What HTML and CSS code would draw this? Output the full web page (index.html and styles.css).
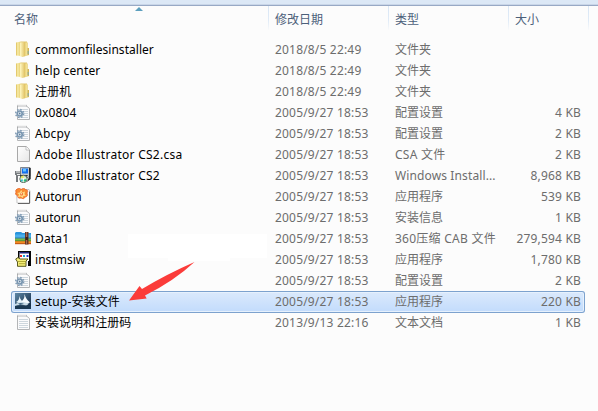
FILE: index.html
```html
<!DOCTYPE html>
<html lang="zh-CN">
<head>
<meta charset="utf-8">
<title>文件列表</title>
<link rel="stylesheet" href="styles.css">
</head>
<body>
<svg class="defs" width="0" height="0">
  <defs>
    <linearGradient id="gold" x1="0" x2="1"><stop offset="0" stop-color="#dcbc58"/><stop offset=".35" stop-color="#f8eca6"/><stop offset="1" stop-color="#e3c868"/></linearGradient>
    <linearGradient id="gold2" x1="0" x2="1"><stop offset="0" stop-color="#fff8c4"/><stop offset="1" stop-color="#e0c161"/></linearGradient>
    <linearGradient id="paper" x1="0" y1="0" x2="1" y2="1"><stop offset="0" stop-color="#fff"/><stop offset="1" stop-color="#e6e6e6"/></linearGradient>
    <linearGradient id="navy" x1="0" y1="0" x2="1" y2="1"><stop offset="0" stop-color="#5d87a6"/><stop offset="1" stop-color="#0c223c"/></linearGradient>
  </defs>
  <symbol id="folder" viewBox="0 0 16 16">
    <path d="M1 1.500 6 .5V15L1 14.400z" fill="url(#gold)"/>
    <path d="M6 .5h6v14L7 15.800z" fill="#e0c56c"/>
    <path d="M5 1.500 10 1v14.300L6 15.800 5 15z" fill="url(#gold2)"/>
    <path d="M10 1.500h2.700v12.800L10 15.300z" fill="url(#gold)"/>
    <path d="M12.500 7H14v7l-1.500.5z" fill="#d2b655"/>
    <path d="M12.700 10h.9v3h-.9z" fill="#7aa9a9"/>
  </symbol>
  <symbol id="note" viewBox="0 0 16 16">
    <path d="M2.500 2h9l3 2.500v11h-12z" fill="#fbfbfc" stroke="#b3b5b7"/>
    <path d="M3 .8v2M5 .8v2M7 .8v2M9 .8v2M11 .8v2" stroke="#939597" stroke-width=".8"/>
    <path d="M4 .8v2M6 .8v2M8 .8v2M10 .8v2" stroke="#fff" stroke-width="1"/>
    <path d="M4 5.500h9M4 7.500h9M4 9.500h9M4 11.500h9M4 13.500h9" stroke="#cdd6dd"/>
  </symbol>
  <symbol id="config" viewBox="0 0 16 16">
    <use href="#note"/>
    <circle cx="4.700" cy="9.500" r="4" fill="none" stroke="#7f9ab4" stroke-width="1.400" stroke-dasharray="1.570 1.570"/>
    <circle cx="4.700" cy="9.500" r="2.500" fill="#eaf2f8" stroke="#7895b0" stroke-width="1.700"/>
    <circle cx="4.700" cy="9.500" r=".9" fill="#607e9b"/>
  </symbol>
  <symbol id="blank" viewBox="0 0 16 16">
    <path d="M2.500.5h8.700l3.300 3.300v11.700h-12z" fill="url(#paper)" stroke="#a8a8a8"/>
    <path d="M11 .8V4h3.300" fill="#fff" stroke="#b5b5b5" stroke-width=".8"/>
  </symbol>
  <symbol id="msi" viewBox="0 0 16 16">
    <path d="M0 4h6v11H5V9H3v6H1V8H0z" fill="#777b7e"/>
    <path d="M1 4.500h4v1H1zM2 7h3v1H2z" fill="#e9ecec"/>
    <path d="M5.500.5H15v8l-2 2H5.500z" fill="#c4c9ce" stroke="#68717a" stroke-width=".8"/>
    <path d="M7 1.500h6v5H7z" fill="#1470ee"/><path d="M8 2h3v2.500H8z" fill="#64c5ff"/>
    <path d="M14 1h1.700v11L12 15l2-5z" fill="#25282b"/>
    <path d="M5 8h8l-1 1.500H5z" fill="#30373b"/>
    <circle cx="8.500" cy="12" r="3.700" fill="#d5eddb" stroke="#26352c" stroke-width=".7"/>
    <path d="M8.500 12 5.500 10l3-1.500z" fill="#f2e648"/><path d="m8.500 12 3.300.5-2 2.700z" fill="#13b766"/><path d="m8.500 12-3.200 1L7 15z" fill="#30bdd0"/>
    <circle cx="8.500" cy="12" r="1" fill="#fff"/>
  </symbol>
  <symbol id="flower" viewBox="0 0 16 16">
    <path d="M1.500 1.500H14L15 3v12H2z" fill="#fff" stroke="#c8c8c8"/>
    <path d="M14.500 3.500v12H3" fill="none" stroke="#666"/>
    <path d="M2 1q3-1.500 4 .5 3-2.500 4.500 0 3.500.5 1.500 3.500 1.500 3.500-1.700 4-1.300 3-4.300 1-3.500 1-3.300-2.300Q-.8 6.500 1 4.300 0 2 2 1z" fill="#f98c32" stroke="#e65d25" stroke-width=".7"/>
    <path d="m6.300 2 1 2.500 2.700-1-.5 2.700 1.500 1.500-2.700.3-.5 2-2-1.500L3 9l1-2.500L2.200 5l2.500-.5z" fill="#ffda86"/>
    <circle cx="6.500" cy="6" r="1.500" fill="#f06433"/><circle cx="6.300" cy="5.700" r=".8" fill="#fff3a6"/>
  </symbol>
  <symbol id="archive" viewBox="0 0 16 16">
    <path d="M0 3 1 2h5l1.500 1H16v4H0z" fill="#2a94dc"/><path d="M0 4.500h16V8H0z" fill="#4cb0ec"/>
    <path d="M0 8h16v3H0z" fill="#79b94a"/><path d="M0 7.500h16v1H0z" fill="#2d7daf"/>
    <path d="M0 11h16v3H0z" fill="#f58b22"/><path d="M0 10.500h16v.7H0z" fill="#477d2c"/><path d="M0 13h16v1.200H0z" fill="#c75d18"/>
    <path d="M10 2h3.500v12.500H10z" fill="#6a3826"/><path d="M11 2h1v12h-1z" fill="#a06a54"/><path d="M10.500 7H13v3h-2.500z" fill="#3b241b"/>
  </symbol>
  <symbol id="box" viewBox="0 0 16 16">
    <path d="M3 0h13v15h-3V9H3z" fill="#050505"/>
    <path d="M4.500 1H14v9H4.500z" fill="#fff"/><path d="M4.500 1H14v1.500H4.500z" fill="#22267a"/>
    <path d="M5 4h2v2H5z" fill="#e12d29"/><path d="M8 4h2v2H8z" fill="#159dd1"/><path d="M11.500 4h2v2h-2z" fill="#2432c7"/>
    <path d="m.7 8 2.300-1.500 2 1.500h8l-2 2v5.300H2.500V11z" fill="#f4ee78" stroke="#4a4810" stroke-width=".9"/>
    <path d="M3 10.500h8M4 12.700h6" stroke="#a39a26" stroke-width=".8"/>
  </symbol>
  <symbol id="shield" viewBox="0 0 16 16">
    <path d="M0 0h16v16H0z" fill="url(#navy)"/>
    <path d="M5 9Q10 7 9.500 1q1.500 5.500 5.500 8.500l-6 2z" fill="#f5fbff"/>
    <path d="M1 9q4-2 3-6 1.500 3.500 3 5l-1 3z" fill="#e8f4fa"/>
    <path d="M0 11q5-2.500 8-2l6 1.500-3 2.500q-6-2-11 0z" fill="#c9dce7"/>
    <path d="M3 10.500q3-1 6 .5l-4 1z" fill="#3f6480"/><path d="M0 13q8-1.500 16 0v3H0z" fill="#1c3953"/>
  </symbol>
</svg>

<div class="toolbar-edge"></div>
<main class="list">
  <header class="head">
    <div class="h name">名称<i class="sort"></i></div>
    <div class="h date">修改日期</div>
    <div class="h type">类型</div>
    <div class="h size">大小</div>
  </header>
  <div class="row"><svg class="icon"><use href="#folder"/></svg><span class="fname snug">commonfilesinstaller</span><span class="fdate">2018/8/5 22:49</span><span class="ftype">文件夹</span><span class="fsize"></span></div>
  <div class="row"><svg class="icon"><use href="#folder"/></svg><span class="fname">help center</span><span class="fdate">2018/8/5 22:49</span><span class="ftype">文件夹</span><span class="fsize"></span></div>
  <div class="row"><svg class="icon"><use href="#folder"/></svg><span class="fname">注册机</span><span class="fdate">2018/8/5 22:49</span><span class="ftype">文件夹</span><span class="fsize"></span></div>
  <div class="row"><svg class="icon"><use href="#config"/></svg><span class="fname">0x0804</span><span class="fdate">2005/9/27 18:53</span><span class="ftype">配置设置</span><span class="fsize">4 KB</span></div>
  <div class="row"><svg class="icon"><use href="#config"/></svg><span class="fname wide">Abcpy</span><span class="fdate">2005/9/27 18:53</span><span class="ftype">配置设置</span><span class="fsize">2 KB</span></div>
  <div class="row"><svg class="icon"><use href="#blank"/></svg><span class="fname wide">Adobe Illustrator CS2.csa</span><span class="fdate">2005/9/27 18:53</span><span class="ftype wide">CSA 文件</span><span class="fsize">2 KB</span></div>
  <div class="row"><svg class="icon"><use href="#msi"/></svg><span class="fname wide">Adobe Illustrator CS2</span><span class="fdate">2005/9/27 18:53</span><span class="ftype latin">Windows Install...</span><span class="fsize">8,968 KB</span></div>
  <div class="row"><svg class="icon"><use href="#flower"/></svg><span class="fname snug">Autorun</span><span class="fdate">2005/9/27 18:53</span><span class="ftype">应用程序</span><span class="fsize">539 KB</span></div>
  <div class="row"><svg class="icon"><use href="#config"/></svg><span class="fname snug">autorun</span><span class="fdate">2005/9/27 18:53</span><span class="ftype">安装信息</span><span class="fsize">1 KB</span></div>
  <div class="row"><svg class="icon"><use href="#archive"/></svg><span class="fname">Data1</span><span class="fdate">2005/9/27 18:53</span><span class="ftype wide">360压缩 CAB 文件</span><span class="fsize">279,594 KB</span></div>
  <div class="row"><svg class="icon"><use href="#box"/></svg><span class="fname snug">instmsiw</span><span class="fdate">2005/9/27 18:53</span><span class="ftype">应用程序</span><span class="fsize">1,780 KB</span></div>
  <div class="row"><svg class="icon"><use href="#config"/></svg><span class="fname snug">Setup</span><span class="fdate">2005/9/27 18:53</span><span class="ftype">配置设置</span><span class="fsize">2 KB</span></div>
  <div class="row selected"><svg class="icon"><use href="#shield"/></svg><span class="fname">setup-安装文件</span><span class="fdate">2005/9/27 18:53</span><span class="ftype">应用程序</span><span class="fsize">220 KB</span></div>
  <div class="row"><svg class="icon"><use href="#note"/></svg><span class="fname snug">安装说明和注册码</span><span class="fdate">2013/9/13 22:16</span><span class="ftype">文本文档</span><span class="fsize">1 KB</span></div>
</main>
<div class="patch"></div>
<div class="patch lower"></div>
<svg class="arrow" viewBox="0 0 67 40"><path d="M65.500 0Q45 19 16 33.500L17.700 36.500 0 38.500 10.500 24 13 27Q38 12 65.500 0z" fill="#fb3c3a"/></svg>
</body>
</html>
```
FILE: styles.css
```css
* { box-sizing: border-box; }
body {
  margin: 0;
  width: 598px;
  height: 411px;
  overflow: hidden;
  position: relative;
  background: #fcfcfc;
  font: 12px/21px "Noto Sans", "Noto Sans CJK SC", sans-serif;
  color: #6d6d6d;
}
.defs { position: absolute; }
.toolbar-edge {
  height: 6px;
  background: #dce8f6;
  border-bottom: 1px solid #98a9c5;
  box-shadow: inset 0 -1px #c9d6e8;
}
.head { display: flex; height: 33px; color: #4c607a; }
.h {
  position: relative;
  height: 24px;
  padding: 4px 0 0 6px;
  line-height: 20px;
  border-right: 1px solid;
  border-image: linear-gradient(#d8e6f5, #e0ebf7 60%, #fcfcfc) 1;
}
.h.name { width: 269px; padding-left: 14px; }
.h.date { width: 120px; }
.h.type { width: 120px; }
.h.size { width: 80px; }
.sort {
  position: absolute;
  left: 135px;
  top: 1px;
  border: solid transparent;
  border-width: 0 4px 4px;
  border-bottom-color: #5c9fbe;
}
.row {
  display: flex;
  height: 21px;
  width: 574px;
  margin-left: 11px;
  padding-left: 4px;
  white-space: nowrap;
}
.icon { width: 16px; height: 16px; margin-top: 2px; flex: none; }
.fname { width: 244px; padding-left: 4px; color: #000; flex: none; letter-spacing: .15px; }
.fname.snug { letter-spacing: .03px; }
.fname.wide { letter-spacing: .26px; }
.fdate { width: 120px; flex: none; letter-spacing: .18px; }
.ftype { width: 110px; flex: none; }
.ftype.latin { letter-spacing: .12px; }
.ftype.wide { letter-spacing: .25px; }
.fsize { flex: 1; text-align: right; padding-right: 4px; letter-spacing: .18px; }
.selected {
  height: 22px;
  margin-bottom: -1px;
  border-radius: 3px;
  background: linear-gradient(#dceafc, #c1dbfc);
  box-shadow: inset 0 0 0 1px #7da2ce, inset 0 0 0 2px #e6f1fd;
}
.patch {
  position: absolute;
  left: 128px;
  top: 234px;
  width: 139px;
  height: 24px;
  background: #fff;
}
.patch.lower { left: 168px; top: 258px; width: 62px; height: 3px; }
.arrow { position: absolute; left: 129px; top: 262px; width: 67px; height: 40px; }
```
